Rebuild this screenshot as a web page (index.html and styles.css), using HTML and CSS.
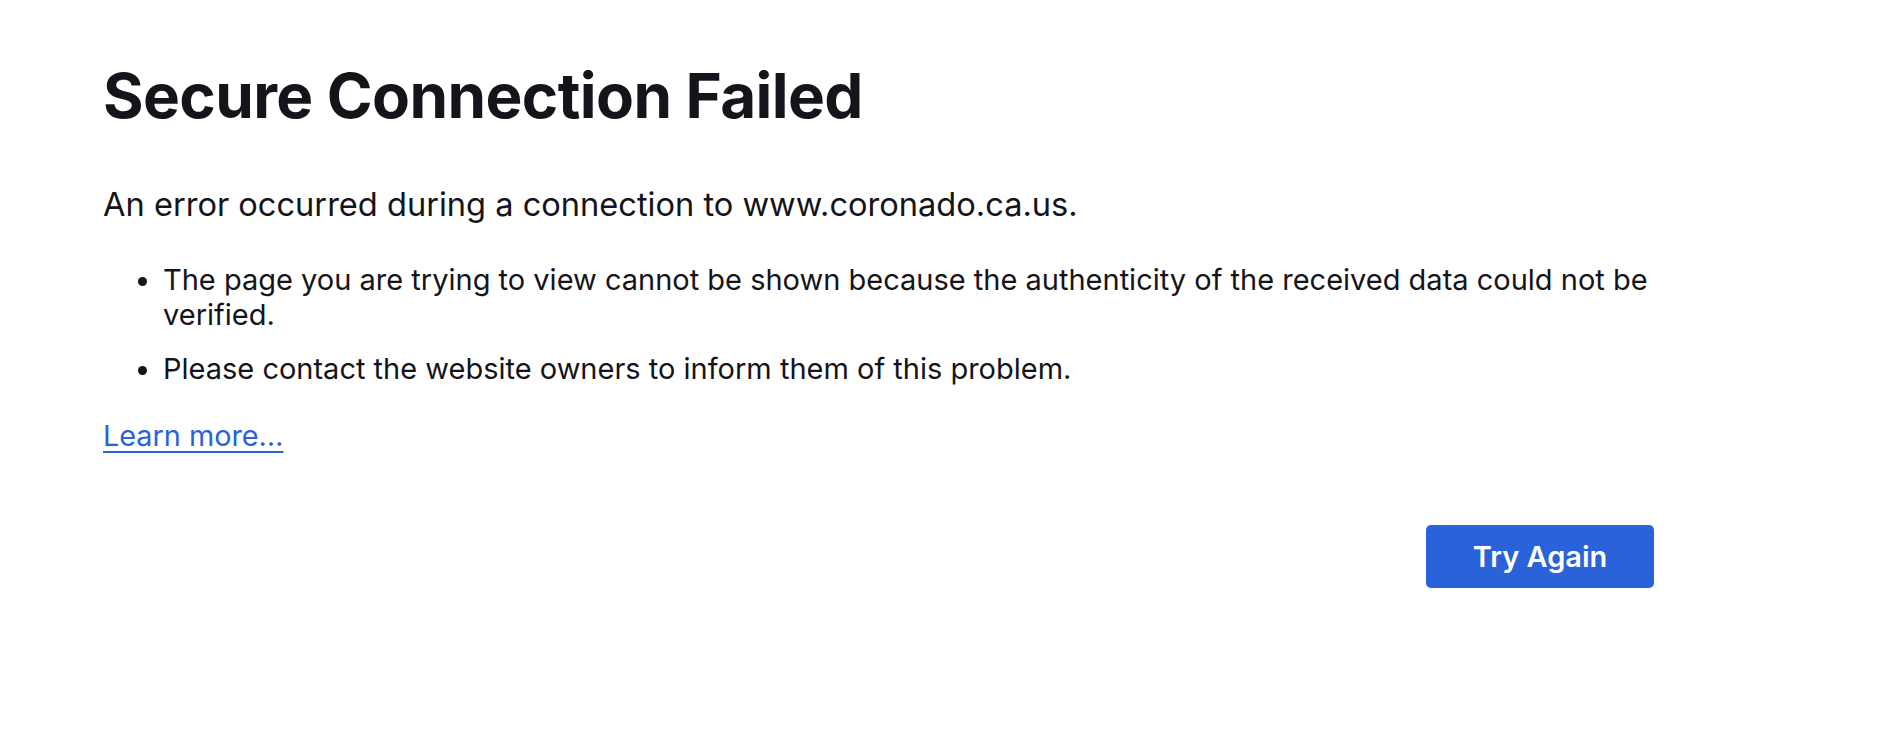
FILE: index.html
```html
<!DOCTYPE html>
<html lang="en">
<head>
<meta charset="UTF-8">
<meta name="viewport" content="width=device-width,initial-scale=1.0">
<title>Secure Connection Failed</title>
<link rel="stylesheet" href="styles.css">
</head>
<body>

<!-- ===== Error page ===== -->
<main class="container">
  <h1 class="title">Secure Connection Failed</h1>
  <p class="intro">An error occurred during a connection to www.coronado.ca.us.</p>

  <ul class="desc">
    <li>The page you are trying to view cannot be shown because the authenticity of the received data could not be verified.</li>
    <li>Please contact the website owners to inform them of this problem.</li>
  </ul>

  <a class="learn" href="#">Learn more…</a>

  <div class="actions">
    <button class="try-btn">Try Again</button>
  </div>
</main>

</body>
</html>
```

FILE: styles.css
```css
:root{
  --text:#15141a;
  --blue:#2962d9;
  font-family:'Inter','Noto Sans',sans-serif;
}
*{box-sizing:border-box}
body,html{margin:0;padding:0;background:#fff;color:var(--text)}

/* ===== Container ===== */
.container{
  width:1654px;padding-left:103px;
  display:flex;flex-direction:column;align-items:flex-start
}

.title{
  margin:60px 0 0;font-size:62px;line-height:72px;
  font-weight:700;letter-spacing:-.6px
}
.intro{margin:52px 0 0;font-size:32.6px;line-height:40px}

/* ===== List ===== */
.desc{margin:38px 0 0;padding-left:60px;font-size:29px;line-height:35px}
.desc li+li{margin-top:19px}

.learn{
  margin-top:32px;font-size:28.8px;line-height:35px;
  color:var(--blue);text-underline-offset:5px;text-decoration-thickness:2px
}

/* ===== Button ===== */
.actions{margin-top:72px;width:100%;display:flex;justify-content:flex-end}
.try-btn{
  width:228px;height:63px;border:none;border-radius:5px;
  background:var(--blue);color:#fff;font-family:inherit;
  font-size:29px;font-weight:600;cursor:pointer
}
```
